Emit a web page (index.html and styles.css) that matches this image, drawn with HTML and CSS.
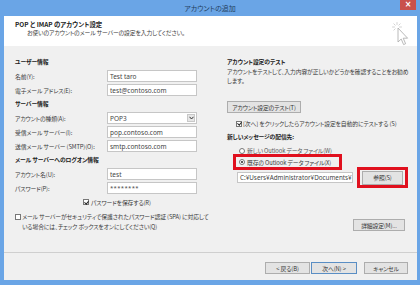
FILE: index.html
```html
<!DOCTYPE html>
<html lang="ja">
<head>
<meta charset="utf-8">
<link rel="stylesheet" href="styles.css">
</head>
<body>
<div class="window">
  <div class="titlebar">
    <span class="title">アカウントの追加</span>
    <span class="close">×</span>
  </div>
  <div class="client">
    <div class="header">
      <div class="h-title">POP と IMAP のアカウント設定</div>
      <div class="h-sub">お使いのアカウントのメール サーバーの設定を入力してください。</div>
      <svg class="cursor" width="20" height="26" viewBox="0 0 20 26">
        <g stroke="#c8c8c8" stroke-width="0.8" stroke-linecap="round">
          <line x1="5" y1="0.5" x2="5" y2="2.5"/>
          <line x1="0.5" y1="5" x2="2.5" y2="5"/>
          <line x1="1.8" y1="1.8" x2="3.2" y2="3.2"/>
          <line x1="8.2" y1="1.8" x2="6.8" y2="3.2"/>
          <line x1="1.8" y1="8.2" x2="3.2" y2="6.8"/>
          <line x1="9.5" y1="5" x2="7.5" y2="5"/>
        </g>
        <path d="M6 6 L6 20 L9.2 17 L11.6 22.6 L13.6 21.7 L11.2 16.2 L15.6 16.2 Z" fill="#fff" stroke="#a8a8a8" stroke-width="0.8" stroke-linejoin="round"/>
      </svg>
    </div>
    <div class="body">
      <div class="left">
        <div class="sec">ユーザー情報</div>
        <div class="row"><span class="lbl">名前(Y):</span><span class="inp">Test taro</span></div>
        <div class="row"><span class="lbl">電子メール アドレス(E):</span><span class="inp">test@contoso.com</span></div>
        <div class="sec">サーバー情報</div>
        <div class="row"><span class="lbl">アカウントの種類(A):</span><span class="inp select">POP3<span class="drop"><svg width="5" height="4" viewBox="0 0 5 4"><path d="M0.5 0.8 L2.5 3 L4.5 0.8" fill="none" stroke="#333" stroke-width="1"/></svg></span></span></div>
        <div class="row"><span class="lbl">受信メール サーバー(I):</span><span class="inp">pop.contoso.com</span></div>
        <div class="row"><span class="lbl">送信メール サーバー (SMTP)(O):</span><span class="inp">smtp.contoso.com</span></div>
        <div class="sec">メール サーバーへのログオン情報</div>
        <div class="row"><span class="lbl">アカウント名(U):</span><span class="inp">test</span></div>
        <div class="row"><span class="lbl">パスワード(P):</span><span class="inp pw">********</span></div>
        <div class="row save"><span class="chk on"></span><span>パスワードを保存する(R)</span></div>
        <div class="spa"><span class="chk"></span><span>メール サーバーがセキュリティで保護されたパスワード認証 (SPA) に対応している場合には、チェック ボックスをオンにしてください(Q)</span></div>
      </div>
      <div class="right">
        <div class="sec">アカウント設定のテスト</div>
        <div class="desc">アカウントをテストして、入力内容が正しいかどうかを確認することをお勧めします。</div>
        <div class="btn test">アカウント設定のテスト(T)</div>
        <div class="auto"><span class="chk on"></span><span>[次へ] をクリックしたらアカウント設定を自動的にテストする (S)</span></div>
        <div class="sec dest">新しいメッセージの配信先:</div>
        <div class="radio r1"><span class="rad"></span><span>新しい Outlook データ ファイル(W)</span></div>
        <div class="radio r2 hl"><span class="rad on"></span><span>既存の Outlook データ ファイル(X)</span></div>
        <div class="pathrow">
          <span class="inp path">C:¥Users¥Administrator¥Documents¥</span>
          <span class="hlbox"><span class="btn ref">参照(S)</span></span>
        </div>
        <div class="adv"><span class="btn more">詳細設定(M)...</span></div>
      </div>
    </div>
    <div class="footer">
      <span class="btn back">&lt; 戻る(B)</span>
      <span class="btn next">次へ(N) &gt;</span>
      <span class="btn cancel">キャンセル</span>
    </div>
  </div>
</div>
</body>
</html>
```
FILE: styles.css
```css
* { box-sizing: border-box; }
html, body { margin: 0; padding: 0; }
body {
  width: 420px; height: 285px; overflow: hidden;
  font-family: "Noto Sans CJK JP", "Noto Sans", sans-serif;
  font-feature-settings: "palt";
  font-size: 5.8px;
  letter-spacing: -0.1px;
  color: #3a3a3a;
}
.window {
  width: 420px; height: 285px;
  background: #6aa5e6;
  display: flex; flex-direction: column;
}
.titlebar {
  height: 16px; position: relative;
  display: flex; justify-content: center; align-items: center;
}
.title { font-size: 7px; letter-spacing: 0; color: #23405f; margin-top: -1px; }
.close {
  position: absolute; right: 4px; top: 0;
  width: 16px; height: 10px;
  background: #c9504b; color: #fff;
  font-family: "DejaVu Sans", sans-serif; font-weight: bold;
  font-size: 8px; line-height: 10px; text-align: center; letter-spacing: 0;
}
.client {
  flex: 1; margin: 0 3px 5px 4px;
  background: #f0f0f0;
  display: flex; flex-direction: column;
}
.header {
  height: 30px; background: #fff; position: relative;
  padding: 5px 0 0 11px;
}
.h-title { font-weight: bold; color: #222; line-height: 8px; font-size: 6.4px; letter-spacing: 0; }
.h-sub { padding-left: 12px; line-height: 8px; }
.cursor { position: absolute; right: 5px; top: 6px; }
.body {
  flex: 1; display: flex;
  padding: 9px 9px 0 11px;
}
.left { width: 182px; }
.right { width: 181px; margin-left: 30px; }
.sec { height: 14px; line-height: 14px; font-weight: bold; color: #222; white-space: nowrap; }
.row { height: 14px; display: flex; align-items: center; white-space: nowrap; }
.lbl { width: 92px; }
.inp {
  display: flex; align-items: center;
  width: 90px; height: 12px;
  background: #fff; border: 1px solid #c6c6c6;
  padding-left: 2px;
  font-family: "Noto Sans", sans-serif; font-size: 6.5px; letter-spacing: 0; color: #444;
}
.select { position: relative; }
.drop {
  position: absolute; right: 1px; top: 1px;
  width: 8px; height: 8px; background: #e6e6e6; border: 1px solid #c8c8c8;
  display: flex; align-items: center; justify-content: center;
}
.pw { letter-spacing: 0.3px; font-size: 6px; }
.chk {
  display: inline-block; flex: none;
  width: 6px; height: 6px; border: 1px solid #777; background: #fff;
  margin-right: 2px; position: relative;
}
.chk.on::after {
  content: ""; position: absolute; left: 1.3px; top: -0.2px;
  width: 1.6px; height: 3.2px;
  border: solid #222; border-width: 0 1px 1px 0;
  transform: rotate(40deg);
}
.save { padding-left: 68px; }
.spa {
  margin-top: 3px; display: flex; align-items: flex-start;
  line-height: 10px; width: 196px;
}
.spa .chk { margin-top: 2px; margin-right: 1px; }
.desc { line-height: 9px; margin-top: -2px; width: 184px; }
.btn {
  display: inline-flex; align-items: center; justify-content: center;
  height: 12px; background: #e3e3e3; border: 1px solid #adadad;
  color: #333; white-space: nowrap;
}
.test { width: 74px; margin-top: 16px; }
.auto { display: flex; align-items: flex-start; line-height: 9px; margin-top: 6px; padding-left: 9px; width: 170px; }
.auto .chk { margin-top: 1.5px; margin-right: 1px; }
.dest { margin-top: 2px; }
.radio { display: flex; align-items: center; height: 13px; padding-left: 12px; white-space: nowrap; }
.rad {
  display: inline-block; flex: none; width: 6px; height: 6px; border-radius: 50%;
  border: 1px solid #777; background: #fff; margin-right: 2px; position: relative;
}
.rad.on::after {
  content: ""; position: absolute; left: 1px; top: 1px; width: 2px; height: 2px;
  border-radius: 50%; background: #222;
}
.r1 { color: #555; }
.hl {
  width: 109px; height: 16px; margin-left: 6px; padding-left: 3px;
  border: 3px solid #e0101e;
  margin-top: -3px;
}
.pathrow { display: flex; align-items: center; height: 21px; margin-top: -3px; }
.path {
  width: 116px; height: 11px; margin-left: 10px; overflow: hidden; white-space: nowrap;
  font-family: "Noto Sans", "Noto Sans CJK JP", sans-serif; font-size: 6.3px;
}
.hlbox {
  border: 3px solid #e0101e; width: 51px; height: 21px; margin-left: 4px;
  display: flex; align-items: center; justify-content: center;
}
.ref { width: 41px; height: 14px; }
.adv { display: flex; justify-content: flex-end; margin-top: 31px; padding-right: 3px; }
.more { width: 52px; }
.footer {
  height: 28px; border-top: 1px solid #cfcfcf;
  display: flex; justify-content: flex-end; align-items: flex-start;
  padding: 9px 9px 0 0;
}
.back { width: 45px; }
.next { width: 46px; margin-left: 1px; border-color: #5a8ec4; }
.cancel { width: 44px; margin-left: 7px; }
```
